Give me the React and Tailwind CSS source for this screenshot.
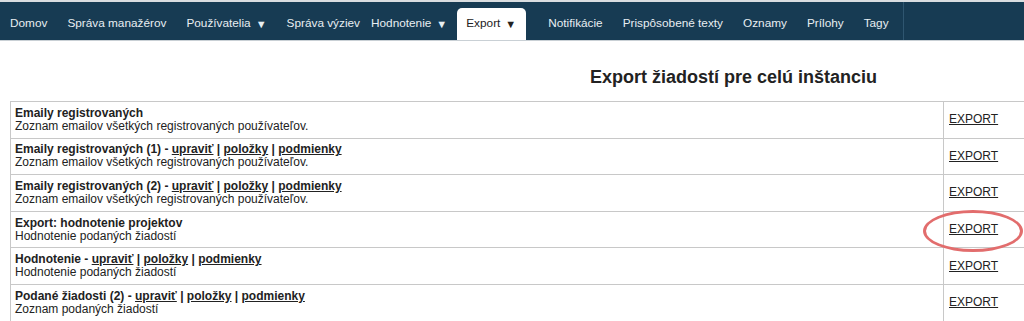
import React from 'react';

const NAV = [
    { label: 'Domov' },
    { label: 'Správa manažérov' },
    { label: 'Používatelia', caret: true },
    { label: 'Správa výziev', tight: true },
    { label: 'Hodnotenie', caret: true },
    { label: 'Export', caret: true, active: true },
    { label: 'Notifikácie' },
    { label: 'Prispôsobené texty' },
    { label: 'Oznamy' },
    { label: 'Prílohy' },
    { label: 'Tagy' },
];

const ROWS = [
    { title: 'Emaily registrovaných', desc: 'Zoznam emailov všetkých registrovaných používateľov.' },
    { title: 'Emaily registrovaných (1)', links: true, desc: 'Zoznam emailov všetkých registrovaných používateľov.' },
    { title: 'Emaily registrovaných (2)', links: true, desc: 'Zoznam emailov všetkých registrovaných používateľov.' },
    { title: 'Export: hodnotenie projektov', desc: 'Hodnotenie podaných žiadostí', circled: true },
    { title: 'Hodnotenie', links: true, desc: 'Hodnotenie podaných žiadostí' },
    { title: 'Podané žiadosti (2)', links: true, desc: 'Zoznam podaných žiadostí' },
];

const App = () => {
    return (
        <div className="w-[1024px] h-[321px] overflow-hidden bg-white text-[#222]" style={{ fontFamily: '"Liberation Sans", Arial, sans-serif' }}>
            {/* Nav */}
            <div className="border-t-2 border-[#d9dde0] bg-[#173b53] h-[41px] flex items-end border-b border-b-[#c9d0d5]">
                <div className="flex items-end h-full border-r border-[#2f5670]">
                    {NAV.map(item => (
                        <div
                            key={item.label}
                            className={
                                'h-[32px] flex items-center text-[11.8px] whitespace-nowrap ' +
                                (item.active
                                    ? 'bg-white text-[#222] rounded-t-[5px] pl-[9px] pr-[10px] mr-[12px]'
                                    : item.tight
                                        ? 'text-[#e8eef2] pl-[10px] pr-[1px]'
                                        : 'text-[#e8eef2] px-[10px]')
                            }
                        >
                            {item.label}{item.caret && <span className="ml-[5px] text-[11px]">▼</span>}
                        </div>
                    ))}
                    <div className="w-[4px]" />
                </div>
            </div>

            {/* Title */}
            <div className="h-[60px] flex items-center pl-[590px] pt-[12px]">
                <h1 className="text-[18px] font-bold text-[#222]">Export žiadostí pre celú inštanciu</h1>
            </div>

            {/* Table */}
            <div className="pl-[10px]">
                <table className="w-[1060px] border-collapse text-[12px] leading-[13px]">
                    <tbody>
                        {ROWS.map(r => (
                            <tr key={r.title} className="h-[36.6px]">
                                <td className="border border-[#c8c8c8] px-[4px] align-middle w-[933px]">
                                    <div className="font-bold">
                                        {r.title}
                                        {r.links && (
                                            <>
                                                {' - '}
                                                <a className="underline">upraviť</a>
                                                {' | '}
                                                <a className="underline">položky</a>
                                                {' | '}
                                                <a className="underline">podmienky</a>
                                            </>
                                        )}
                                    </div>
                                    <div>{r.desc}</div>
                                </td>
                                <td className="border border-[#c8c8c8] px-[5px] align-middle">
                                    <span className="relative inline-block">
                                        <a className="underline text-[#222]">EXPORT</a>
                                        {r.circled && (
                                            <span className="absolute left-[-26px] top-[-13px] w-[100px] h-[42px] rounded-[50%] border-[3px] border-[#e26d6d] blur-[0.6px]" />
                                        )}
                                    </span>
                                </td>
                            </tr>
                        ))}
                    </tbody>
                </table>
            </div>
        </div>
    );
};

export default App;
